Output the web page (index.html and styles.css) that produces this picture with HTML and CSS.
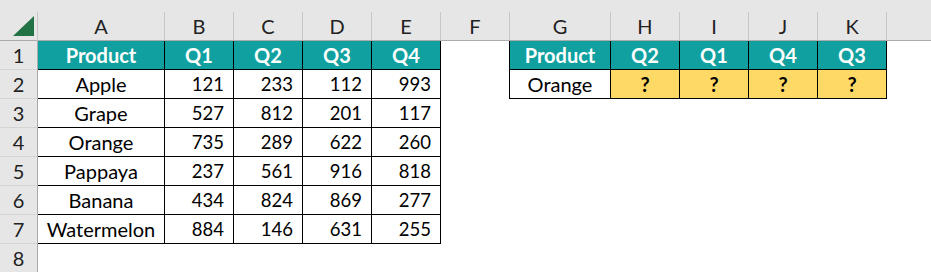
FILE: index.html
```html
<!DOCTYPE html>
<html>
<head>
<meta charset="utf-8">
<link rel="stylesheet" href="styles.css">
</head>
<body>
<div class="band"></div>
<div class="sheet">
  <div class="ch corner"><svg width="37" height="28" viewBox="0 0 37 28"><polygon points="13,24 34,24 34,4" fill="#217346"/></svg></div>
  <div class="ch">A</div><div class="ch">B</div><div class="ch">C</div><div class="ch">D</div><div class="ch">E</div><div class="ch">F</div><div class="ch">G</div><div class="ch">H</div><div class="ch">I</div><div class="ch">J</div><div class="ch">K</div><div class="ch last"></div>

  <div class="rh">1</div>
  <div class="c b hd ctr">Product</div><div class="c b hd ctr">Q1</div><div class="c b hd ctr">Q2</div><div class="c b hd ctr">Q3</div><div class="c b hd ctr">Q4</div>
  <div class="c br"></div>
  <div class="c b hd ctr">Product</div><div class="c b hd ctr">Q2</div><div class="c b hd ctr">Q1</div><div class="c b hd ctr">Q4</div><div class="c b hd ctr">Q3</div><div class="c"></div>

  <div class="rh">2</div>
  <div class="c b ctr">Apple</div><div class="c b num">121</div><div class="c b num">233</div><div class="c b num">112</div><div class="c b num">993</div>
  <div class="c br"></div>
  <div class="c b ctr">Orange</div><div class="c b q ctr">?</div><div class="c b q ctr">?</div><div class="c b q ctr">?</div><div class="c b q ctr">?</div><div class="c"></div>

  <div class="rh">3</div>
  <div class="c b ctr">Grape</div><div class="c b num">527</div><div class="c b num">812</div><div class="c b num">201</div><div class="c b num">117</div>
  <div class="c"></div><div class="c"></div><div class="c"></div><div class="c"></div><div class="c"></div><div class="c"></div><div class="c"></div>

  <div class="rh">4</div>
  <div class="c b ctr">Orange</div><div class="c b num">735</div><div class="c b num">289</div><div class="c b num">622</div><div class="c b num">260</div>
  <div class="c"></div><div class="c"></div><div class="c"></div><div class="c"></div><div class="c"></div><div class="c"></div><div class="c"></div>

  <div class="rh">5</div>
  <div class="c b ctr">Pappaya</div><div class="c b num">237</div><div class="c b num">561</div><div class="c b num">916</div><div class="c b num">818</div>
  <div class="c"></div><div class="c"></div><div class="c"></div><div class="c"></div><div class="c"></div><div class="c"></div><div class="c"></div>

  <div class="rh">6</div>
  <div class="c b ctr">Banana</div><div class="c b num">434</div><div class="c b num">824</div><div class="c b num">869</div><div class="c b num">277</div>
  <div class="c"></div><div class="c"></div><div class="c"></div><div class="c"></div><div class="c"></div><div class="c"></div><div class="c"></div>

  <div class="rh">7</div>
  <div class="c b ctr">Watermelon</div><div class="c b num">884</div><div class="c b num">146</div><div class="c b num">631</div><div class="c b num">255</div>
  <div class="c"></div><div class="c"></div><div class="c"></div><div class="c"></div><div class="c"></div><div class="c"></div><div class="c"></div>

  <div class="rh">8</div>
  <div class="c"></div><div class="c"></div><div class="c"></div><div class="c"></div><div class="c"></div><div class="c"></div><div class="c"></div><div class="c"></div><div class="c"></div><div class="c"></div><div class="c"></div><div class="c"></div>
</div>
</body>
</html>
```
FILE: styles.css
```css
html, body {
  margin: 0;
  padding: 0;
  background: #ffffff;
  overflow: hidden;
}
body {
  font-family: Lato, "Liberation Sans", sans-serif;
  font-size: 20px;
  color: #000;
}
.band {
  height: 12px;
  background: #e6e6e6;
}
.sheet {
  display: grid;
  grid-template-columns: 38px 127px repeat(5, 69px) 101px repeat(4, 69px) 1fr;
  grid-template-rows: 29px repeat(8, 29px);
}
.ch {
  background: #e6e6e6;
  border-right: 1px solid #c8c8c8;
  border-bottom: 1px solid #ababab;
  display: flex;
  align-items: center;
  justify-content: center;
  color: #222;
}
.ch.corner {
  justify-content: flex-start;
  align-items: flex-start;
}
.ch.corner svg { display: block; }
.ch.last { border-right: none; }
.rh {
  background: #e6e6e6;
  border-right: 1px solid #ababab;
  border-bottom: 1px solid #d4d4d4;
  display: flex;
  align-items: center;
  justify-content: center;
  color: #222;
}
.c {
  display: flex;
  align-items: center;
  overflow: hidden;
  white-space: nowrap;
}
.c.b {
  border-right: 1px solid #000;
  border-bottom: 1px solid #000;
}
.c.br {
  border-right: 1px solid #000;
}
.ctr { justify-content: center; }
.num {
  justify-content: flex-end;
  padding-right: 9px;
  font-size: 18.5px;
}
.hd {
  background: #0fa09f;
  color: #ffffff;
  font-weight: bold;
}
.q {
  background: #ffd966;
  font-weight: bold;
}
```
